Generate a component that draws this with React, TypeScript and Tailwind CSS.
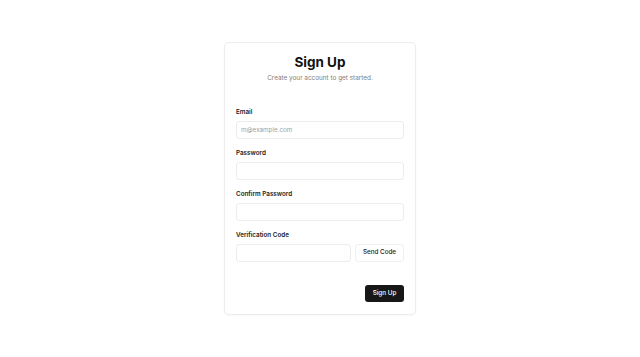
export default function App() {
  const fields = [
    { label: "Email", placeholder: "m@example.com", type: "email" },
    { label: "Password", placeholder: "", type: "password" },
    { label: "Confirm Password", placeholder: "", type: "password" },
  ];

  return (
    <div
      className="flex min-h-[357px] w-full justify-center bg-white pt-[42px]"
      style={{ fontFamily: "Inter, 'Noto Sans', sans-serif" }}
    >
      <div className="flex h-[273px] w-[192px] flex-col rounded-[5px] border border-[#ececec] bg-white px-[11px] pt-[10px] pb-[12px] shadow-[0_1px_2px_rgba(0,0,0,0.03)]">
        <h1 className="text-center text-[13.5px] leading-[18px] font-bold text-[#111]">Sign Up</h1>
        <p className="mt-[3px] text-center text-[6.4px] leading-[8px] text-[#808080]">
          Create your account to get started.
        </p>

        <div className="mt-[26px] flex flex-col gap-[10px]">
          {fields.map((f) => (
            <div key={f.label} className="flex flex-col gap-[5px]">
              <label className="text-[6.3px] leading-[8px] font-semibold text-[#222]">{f.label}</label>
              <input
                type={f.type}
                placeholder={f.placeholder}
                className="h-[18px] w-full rounded-[3px] border border-[#ececec] px-[4px] text-[6.3px] text-[#222] outline-none placeholder:text-[#a0a0a0]"
              />
            </div>
          ))}
          <div className="flex flex-col gap-[5px]">
            <label className="text-[6.3px] leading-[8px] font-semibold text-[#222]">Verification Code</label>
            <div className="flex gap-[4px]">
              <input
                type="text"
                className="h-[18px] w-[115px] rounded-[3px] border border-[#ececec] px-[4px] text-[6.3px] outline-none"
              />
              <button className="h-[18px] flex-1 rounded-[3px] border border-[#f0f0f0] text-[6.3px] font-medium text-[#222]">
                Send Code
              </button>
            </div>
          </div>
        </div>

        <div className="mt-auto flex justify-end">
          <button className="h-[17px] w-[39px] rounded-[3px] bg-[#171717] text-[6.3px] font-medium text-white">
            Sign Up
          </button>
        </div>
      </div>
    </div>
  );
}
